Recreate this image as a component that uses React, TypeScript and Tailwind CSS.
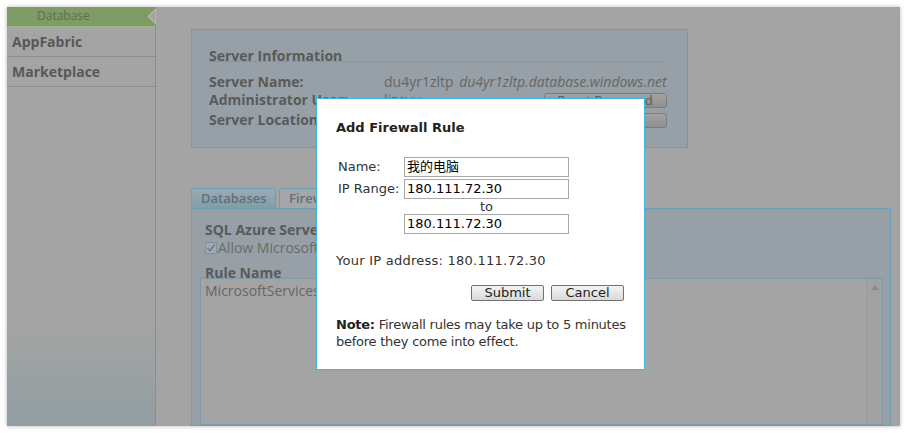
import React from "react";

const pageFont = "font-['Open_Sans','Noto_Sans',sans-serif]";
const dlgFont = "font-['DejaVu_Sans','Noto_Sans_CJK_SC',sans-serif]";

function Sidebar() {
  return (
    <aside className="w-[149px] shrink-0 flex flex-col border-r border-[#8c8c8c] bg-linear-to-b from-[#a4a4a4] from-75% to-[#929ea2]">
      <div className="relative h-[20px] bg-[#7f9c67] border-b border-[#9cb888] pl-[30px] text-[12px] leading-[18px] text-[#5c6f4d]">
        Database
        <svg className="absolute right-[-1px] top-[2px]" width="9" height="15" viewBox="0 0 9 15">
          <polygon points="9,0 1,7.5 9,15" fill="#a4a4a4" stroke="#c3cdb9" strokeWidth="1" />
        </svg>
      </div>
      <div className="h-[30px] flex items-center pl-[5px] border-b border-[#8c8c8c] text-[14px] font-bold text-[#585858]">
        AppFabric
      </div>
      <div className="h-[30px] flex items-center pl-[5px] border-b border-[#8c8c8c] text-[14px] font-bold text-[#585858]">
        Marketplace
      </div>
    </aside>
  );
}

function DimButton({ label }: { label: string }) {
  return (
    <div className="mt-[2px] w-[123px] h-[15px] rounded-[3px] border border-[#7c7c7c] bg-linear-to-b from-[#a2a2a2] to-[#909090] text-center text-[13px] leading-[13px] text-[#5a5a5a]">
      {label}
    </div>
  );
}

function ServerInfo() {
  return (
    <div className="w-[497px] h-[119px] border border-[#6b9eb5] bg-[#96a0a6] pl-[17px] pr-[22px] pt-[18px]">
      <div className="h-[14px] border-b border-[#6aa0b8] text-[14px] font-bold leading-[16px] text-[#5a5a5a]">
        Server Information
      </div>
      <div className="mt-[11px] grid grid-cols-[175px_1fr] text-[14px] text-[#5a5a5a]">
        <div className="h-[18px] leading-[18px] font-bold">Server Name:</div>
        <div className="h-[18px] leading-[18px] text-[#676767] whitespace-nowrap">
          du4yr1zltp <i className="ml-[2px]">du4yr1zltp.database.windows.net</i>
        </div>
        <div className="h-[20px] leading-[18px] font-bold">Administrator User:</div>
        <div className="h-[20px] flex items-start justify-between text-[#676767]">
          <span className="leading-[18px]">lizeyu</span>
          <DimButton label="Reset Password" />
        </div>
        <div className="h-[20px] leading-[18px] font-bold">Server Location:</div>
        <div className="h-[20px] flex items-start justify-end">
          <DimButton label="Drop Server" />
        </div>
      </div>
    </div>
  );
}

function FirewallPanel() {
  return (
    <div className="flex flex-col flex-1 min-h-0">
      <div className="flex items-end gap-[3px] h-[20px]">
        <div className="w-[85px] h-[21px] -mb-px rounded-t-[3px] border border-[#6b9eb5] bg-linear-to-b from-[#9aabb4] to-[#7f9dab] pl-[9px] text-[13px] font-semibold leading-[19px] text-[#636e74]">
          Databases
        </div>
        <div className="w-[110px] h-[21px] -mb-px rounded-t-[3px] border border-b-0 border-[#6b9eb5] bg-[#a3a7a9] pl-[9px] text-[13px] font-semibold leading-[19px] text-[#636e74]">
          Firewall
        </div>
      </div>
      <div className="w-[700px] flex-1 border border-[#6b9eb5] bg-[#96a0a6] pl-[8px] pr-[7px] pt-[13px] flex flex-col">
        <div className="pl-[5px] text-[14px] font-bold leading-[16px] text-[#5a5a5a]">SQL Azure Server Firewall</div>
        <div className="pl-[5px] mt-[1px] flex items-center h-[17px] text-[14px] text-[#6a6a6a]">
          <span className="w-[12px] h-[12px] border border-[#7f8f9c] bg-[#a2aab0] flex items-center justify-center">
            <svg width="10" height="10" viewBox="0 0 10 10">
              <path d="M1.5 5.2 L4 7.8 L8.6 1.6" fill="none" stroke="#6b7b95" strokeWidth="1.6" />
            </svg>
          </span>
          <span className="ml-[1px]">Allow Microsoft Services</span>
        </div>
        <div className="pl-[5px] mt-[10px] text-[14px] font-bold leading-[14px] text-[#5a5a5a]">Rule Name</div>
        <div className="-mt-[2px] flex-1 flex border border-[#7d98a6] bg-[#a4a4a4]">
          <div className="flex-1 pl-[4px] pt-[3px] text-[14px] leading-[17px] text-[#666]">MicrosoftServices</div>
          <div className="w-[16px] border-l border-[#9c9c9c] bg-[#a1a1a1] flex justify-center pt-[6px]">
            <svg width="8" height="5" viewBox="0 0 8 5">
              <polygon points="4,0 8,5 0,5" fill="#8a8a8a" />
            </svg>
          </div>
        </div>
      </div>
    </div>
  );
}

function FirewallDialog() {
  const input = "w-[165px] h-[20px] border border-[#a8a8a8] px-[2px] text-[13px] leading-[18px] text-black";
  const button = "w-[73px] h-[16px] rounded-[2px] border border-[#707070] bg-linear-to-b from-[#f4f4f4] to-[#d9d9d9] text-center text-[13px] leading-[14px] text-[#222]";
  return (
    <div className={`absolute left-[309px] top-[91px] w-[329px] h-[272px] bg-white border border-[#3cb4e6] pt-[21px] pl-[19px] pr-[20px] text-[13px] text-[#333] ${dlgFont}`}>
      <div className="font-bold leading-[16px] text-[#222]">Add Firewall Rule</div>
      <div className="mt-[21px] flex flex-col gap-[2px]">
        <div className="flex items-center h-[20px]">
          <span className="w-[68px] pl-[2px]">Name:</span>
          <div className={input}>我的电脑</div>
        </div>
        <div className="flex items-center h-[20px]">
          <span className="w-[68px] pl-[2px]">IP Range:</span>
          <div className={input}>180.111.72.30</div>
        </div>
      </div>
      <div className="flex h-[15px]">
        <span className="w-[68px]" />
        <span className="w-[165px] text-center leading-[16px]">to</span>
      </div>
      <div className="flex h-[20px]">
        <span className="w-[68px]" />
        <div className={input}>180.111.72.30</div>
      </div>
      <div className="mt-[19px] leading-[16px] tracking-[0.25px]">Your IP address: 180.111.72.30</div>
      <div className="mt-[16px] flex justify-end gap-[7px]">
        <div className={button}>Submit</div>
        <div className={button}>Cancel</div>
      </div>
      <p className="mt-[15px] leading-[17px] whitespace-nowrap tracking-[-0.25px]">
        <b className="text-[#222]">Note:</b> Firewall rules may take up to 5 minutes
        <br />
        before they come into effect.
      </p>
    </div>
  );
}

export default function App() {
  return (
    <div className={`w-[907px] h-[433px] bg-white p-[7px] ${pageFont}`}>
      <div className="relative flex w-[893px] h-[419px] overflow-hidden bg-[#a4a4a4] shadow-[0_0_4px_rgba(0,0,0,0.3)]">
        <Sidebar />
        <main className="flex-1 flex flex-col pl-[35px] pt-[22px] min-w-0">
          <ServerInfo />
          <div className="mt-[40px] flex-1 flex flex-col min-h-0">
            <FirewallPanel />
          </div>
        </main>
        <FirewallDialog />
      </div>
    </div>
  );
}
